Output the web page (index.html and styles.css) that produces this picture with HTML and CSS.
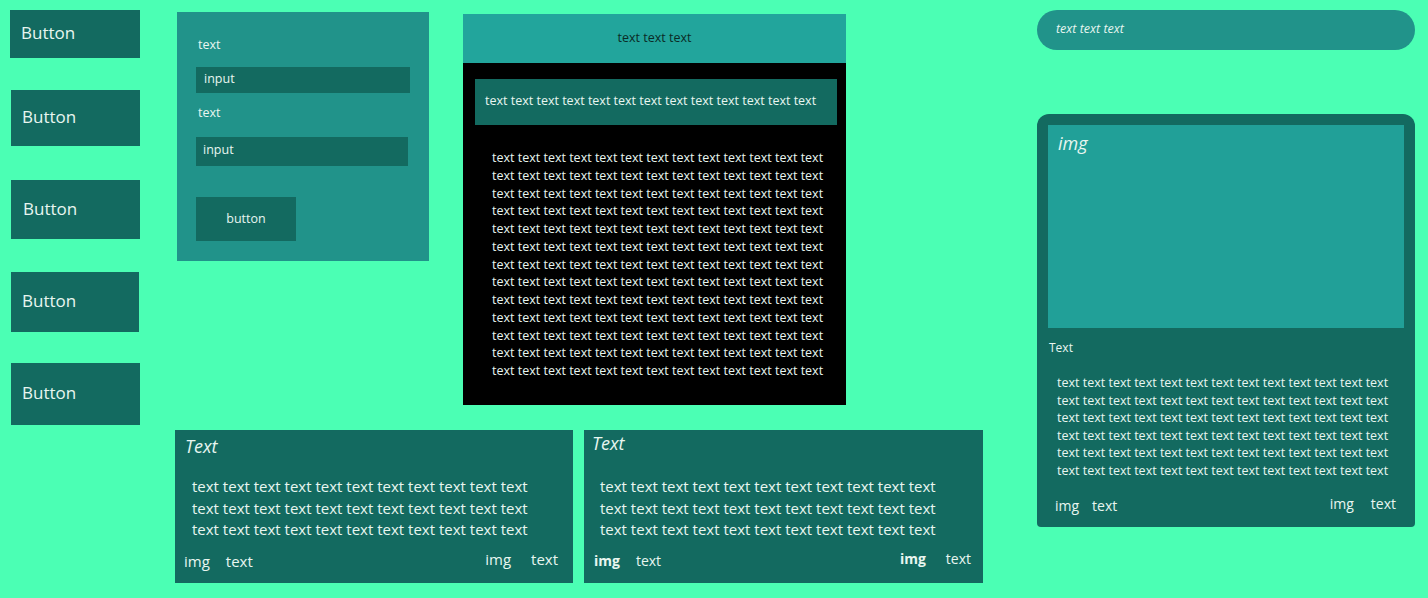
FILE: index.html
```html
<!DOCTYPE html>
<html lang="en">
<head>
<meta charset="utf-8">
<title>Widgets</title>
<link rel="stylesheet" href="styles.css">
</head>
<body>
<div class="page">
  <div class="col-buttons">
    <button class="btn b1">Button</button>
    <button class="btn b2">Button</button>
    <button class="btn b3">Button</button>
    <button class="btn b4">Button</button>
    <button class="btn b5">Button</button>
  </div>

  <div class="col-middle">
    <div class="top-row">
      <form class="form-panel">
        <div class="label">text</div>
        <div class="input i1">input</div>
        <div class="label l2">text</div>
        <div class="input i2">input</div>
        <div class="form-btn">button</div>
      </form>

      <div class="dark-panel">
        <div class="dark-head">text text text</div>
        <div class="dark-bar">text text text text text text text text text text text text text</div>
        <div class="dark-body">
          <p>text text text text text text text text text text text text text</p>
          <p>text text text text text text text text text text text text text</p>
          <p>text text text text text text text text text text text text text</p>
          <p>text text text text text text text text text text text text text</p>
          <p>text text text text text text text text text text text text text</p>
          <p>text text text text text text text text text text text text text</p>
          <p>text text text text text text text text text text text text text</p>
          <p>text text text text text text text text text text text text text</p>
          <p>text text text text text text text text text text text text text</p>
          <p>text text text text text text text text text text text text text</p>
          <p>text text text text text text text text text text text text text</p>
          <p>text text text text text text text text text text text text text</p>
          <p>text text text text text text text text text text text text text</p>
        </div>
      </div>
    </div>

    <div class="bottom-row">
      <div class="card c1">
        <div class="card-title">Text</div>
        <div class="card-body">
          <p>text text text text text text text text text text text</p>
          <p>text text text text text text text text text text text</p>
          <p>text text text text text text text text text text text</p>
        </div>
        <div class="card-foot">
          <div class="foot-left"><span class="f-img">img</span><span class="f-text">text</span></div>
          <div class="foot-right"><span class="f-img">img</span><span class="f-text">text</span></div>
        </div>
      </div>
      <div class="card c2">
        <div class="card-title">Text</div>
        <div class="card-body">
          <p>text text text text text text text text text text text</p>
          <p>text text text text text text text text text text text</p>
          <p>text text text text text text text text text text text</p>
        </div>
        <div class="card-foot">
          <div class="foot-left"><span class="f-img bold">img</span><span class="f-text">text</span></div>
          <div class="foot-right"><span class="f-img bold">img</span><span class="f-text">text</span></div>
        </div>
      </div>
    </div>
  </div>

  <div class="col-right">
    <div class="pill">text text text</div>
    <div class="media-card">
      <div class="media-img">img</div>
      <div class="media-title">Text</div>
      <div class="media-body">
        <p>text text text text text text text text text text text text text</p>
        <p>text text text text text text text text text text text text text</p>
        <p>text text text text text text text text text text text text text</p>
        <p>text text text text text text text text text text text text text</p>
        <p>text text text text text text text text text text text text text</p>
        <p>text text text text text text text text text text text text text</p>
      </div>
      <div class="media-foot">
        <div class="foot-left"><span class="m-img">img</span><span class="m-text">text</span></div>
        <div class="foot-right"><span class="m-img">img</span><span class="m-text">text</span></div>
      </div>
    </div>
  </div>
</div>
</body>
</html>
```

FILE: styles.css
```css
* { box-sizing: border-box; }

html, body {
  margin: 0;
  padding: 0;
  background: #4bffb4;
  font-family: "Open Sans", "Noto Sans", "Liberation Sans", sans-serif;
  color: #e8f6f0;
}

p { margin: 0; }

.page {
  display: flex;
  align-items: flex-start;
  padding: 10px 0 0 10px;
}

/* ---------- left buttons ---------- */
.col-buttons {
  display: flex;
  flex-direction: column;
  width: 130px;
}

.btn {
  border: 0;
  background: #136a60;
  color: #e8f6f0;
  font-family: inherit;
  font-size: 17px;
  text-align: left;
  padding: 0 0 3px 11px;
  width: 130px;
}
.b1 { height: 48px; }
.b2 { height: 56px; margin: 32px 0 0 1px; width: 129px; }
.b3 { height: 59px; margin: 34px 0 0 1px; width: 129px; padding-left: 12px; }
.b4 { height: 60px; margin: 33px 0 0 1px; width: 128px; }
.b5 { height: 62px; margin: 31px 0 0 1px; width: 129px; }

/* ---------- middle ---------- */
.col-middle {
  margin-left: 35px;
  width: 808px;
}

.top-row {
  display: flex;
  align-items: flex-start;
}

.form-panel {
  margin: 2px 0 0 2px;
  width: 252px;
  height: 249px;
  background: #21938a;
  padding: 25px 0 0 19px;
  font-size: 12.5px;
}

.label {
  height: 16px;
  line-height: 16px;
  padding-left: 2px;
}
.i1 { margin-top: 14px; }
.l2 { margin-top: 12px; }

.input {
  background: #136a60;
  width: 214px;
  height: 26px;
  line-height: 24px;
  padding-left: 8px;
}
.i2 {
  margin-top: 16px;
  width: 212px;
  height: 29px;
  line-height: 25px;
  padding-left: 7px;
}

.form-btn {
  margin-top: 31px;
  width: 100px;
  height: 44px;
  line-height: 44px;
  background: #136a60;
  text-align: center;
}

.dark-panel {
  margin: 4px 0 0 34px;
  width: 383px;
  height: 391px;
  background: #000;
}

.dark-head {
  height: 49px;
  background: #22a59c;
  color: #0b2b26;
  font-size: 12.5px;
  text-align: center;
  line-height: 47px;
}

.dark-bar {
  margin: 16px 0 0 12px;
  width: 362px;
  height: 46px;
  background: #136a60;
  font-size: 12.5px;
  line-height: 44px;
  padding-left: 10px;
  white-space: nowrap;
}

.dark-body {
  margin-top: 24px;
  padding-left: 29px;
  font-size: 12.5px;
  line-height: 17.75px;
  white-space: nowrap;
}

.bottom-row {
  display: flex;
  gap: 11px;
  margin-top: 25px;
}

.card {
  width: 398px;
  height: 153px;
  background: #136a60;
  display: flex;
  flex-direction: column;
}
.c2 { width: 399px; }

.card-title {
  font-style: italic;
  font-size: 18px;
  line-height: 24px;
  padding: 4px 0 0 10px;
}
.c2 .card-title { padding: 1px 0 0 8px; }

.card-body {
  margin-top: 18px;
  padding-left: 17px;
  font-size: 15px;
  line-height: 21.5px;
  white-space: nowrap;
}
.c2 .card-body { margin-top: 21px; padding-left: 16px; }

.card-foot {
  display: flex;
  justify-content: space-between;
  align-items: center;
  padding: 0 15px 0 9px;
  margin-top: 10px;
  font-size: 15px;
}
.c2 .card-foot { padding: 0 12px 0 10px; font-size: 14px; margin-top: 10px; }

.foot-left, .foot-right {
  display: flex;
  align-items: center;
}
.f-img { margin-right: 16px; }
.bold { font-weight: 700; }
.foot-right .f-text { position: relative; top: -2px; }
.foot-right .f-img { position: relative; top: -2px; margin-right: 20px; }

/* ---------- right column ---------- */
.col-right {
  margin-left: 54px;
  width: 378px;
}

.pill {
  height: 40px;
  border-radius: 20px;
  background: #21938a;
  font-style: italic;
  font-size: 12.5px;
  line-height: 37px;
  padding-left: 19px;
}

.media-card {
  margin-top: 64px;
  height: 413px;
  background: #136a60;
  border-radius: 12px 12px 4px 4px;
  padding: 11px 11px 0;
}

.media-img {
  height: 203px;
  background: #21a098;
  font-style: italic;
  font-size: 18px;
  padding: 6px 0 0 10px;
  line-height: 24px;
}

.media-title {
  margin-top: 12px;
  font-size: 12px;
  line-height: 16px;
  padding-left: 1px;
}

.media-body {
  margin-top: 18px;
  padding-left: 9px;
  font-size: 12.5px;
  line-height: 17.6px;
  white-space: nowrap;
}

.media-foot {
  display: flex;
  justify-content: space-between;
  align-items: center;
  margin-top: 16px;
  padding: 0 8px 0 7px;
  font-size: 14px;
}
.m-img { margin-right: 13px; }
.media-foot .foot-right { position: relative; top: -2px; }
.media-foot .foot-right .m-img { margin-right: 17px; }
```
